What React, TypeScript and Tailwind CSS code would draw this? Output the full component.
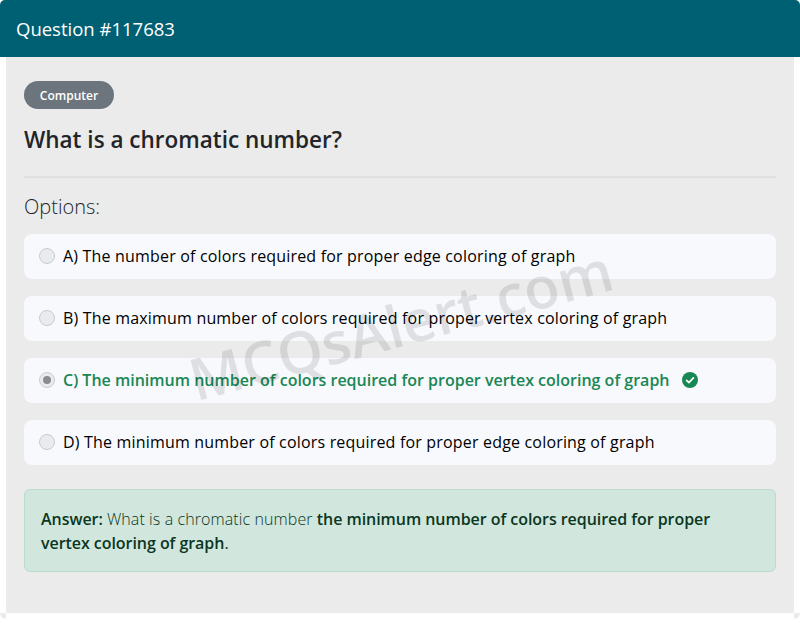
const options = [
  { label: 'A) The number of colors required for proper edge coloring of graph' },
  { label: 'B) The maximum number of colors required for proper vertex coloring of graph' },
  { label: 'C) The minimum number of colors required for proper vertex coloring of graph', correct: true },
  { label: 'D) The minimum number of colors required for proper edge coloring of graph' },
]

const CheckBadge = () => (
  <svg width="16" height="16" viewBox="0 0 16 16" className="ml-3 shrink-0">
    <circle cx="8" cy="8" r="8" fill="#198754" />
    <path d="M4.6 8.3l2.3 2.3 4.5-4.7" fill="none" stroke="#fff" strokeWidth="1.7" strokeLinecap="round" strokeLinejoin="round" />
  </svg>
)

const Radio = ({ checked }: { checked?: boolean }) => (
  <span className="mr-2 flex h-4 w-4 shrink-0 items-center justify-center rounded-full border border-[#c9cbce] bg-[#e9ecef]">
    {checked && <span className="h-2 w-2 rounded-full bg-[#8a8d90]" />}
  </span>
)

export default function App() {
  return (
    <div className="relative h-[644px] w-[800px] overflow-hidden bg-white font-['Open_Sans',sans-serif]">
      <header className="flex h-[57px] items-center rounded-t-[5px] bg-[#006073] px-4 pt-px text-[18.5px] font-normal text-white">
        Question #117683
      </header>

      <main className="mx-[6px] h-[556px] bg-[#ebebeb] px-[18px] pt-6">
        <span className="inline-flex h-7 w-[90px] items-center justify-center rounded-full bg-[#6c757d] pt-px text-[12px] font-semibold text-white">
          Computer
        </span>
        <h1 className="mt-[15px] text-[22.5px] leading-[32px] font-semibold text-[#212529]">
          What is a chromatic number?
        </h1>
        <hr className="mt-[20px] border-t-2 border-[#e0e0e0]" />
        <h2 className="mt-[14px] text-[20px] leading-[30px] font-light text-[#212529]">Options:</h2>

        <ul className="mt-[12px] flex flex-col gap-[17px]">
          {options.map((option) => (
            <li
              key={option.label}
              className={`flex h-[45px] items-center rounded-lg bg-[#f8f9fd] px-[15px] pb-px text-[16px] ${
                option.correct ? 'font-semibold text-[#198754]' : 'font-medium tracking-[0.18px] text-black'
              }`}
            >
              <Radio checked={option.correct} />
              {option.label}
              {option.correct && <CheckBadge />}
            </li>
          ))}
        </ul>

        <div className="mt-6 h-[83px] rounded-md border border-[#badbcc] bg-[#d1e7dd] px-4 pt-[17px] text-[16px] leading-[24px] text-[#0a3622]">
          <strong className="font-semibold tracking-[-0.05px]">Answer:</strong>{' '}
          <span className="font-light tracking-[0.1px]">What is a chromatic number</span>{' '}
          <strong className="font-semibold tracking-[-0.05px]">the minimum number of colors required for proper vertex coloring of graph</strong>.
        </div>
      </main>

      <div className="absolute top-[613px] left-0 h-[6px] w-[6px] rounded-bl-[6px] bg-[#ebebeb]" />
      <div className="absolute top-[613px] right-0 h-[6px] w-[6px] rounded-br-[6px] bg-[#ebebeb]" />

      <div className="pointer-events-none absolute top-[288px] left-[183px] -rotate-[15deg] text-[58px] leading-[72px] font-semibold whitespace-nowrap text-black/10">
        MCQsAlert.com
      </div>
    </div>
  )
}
